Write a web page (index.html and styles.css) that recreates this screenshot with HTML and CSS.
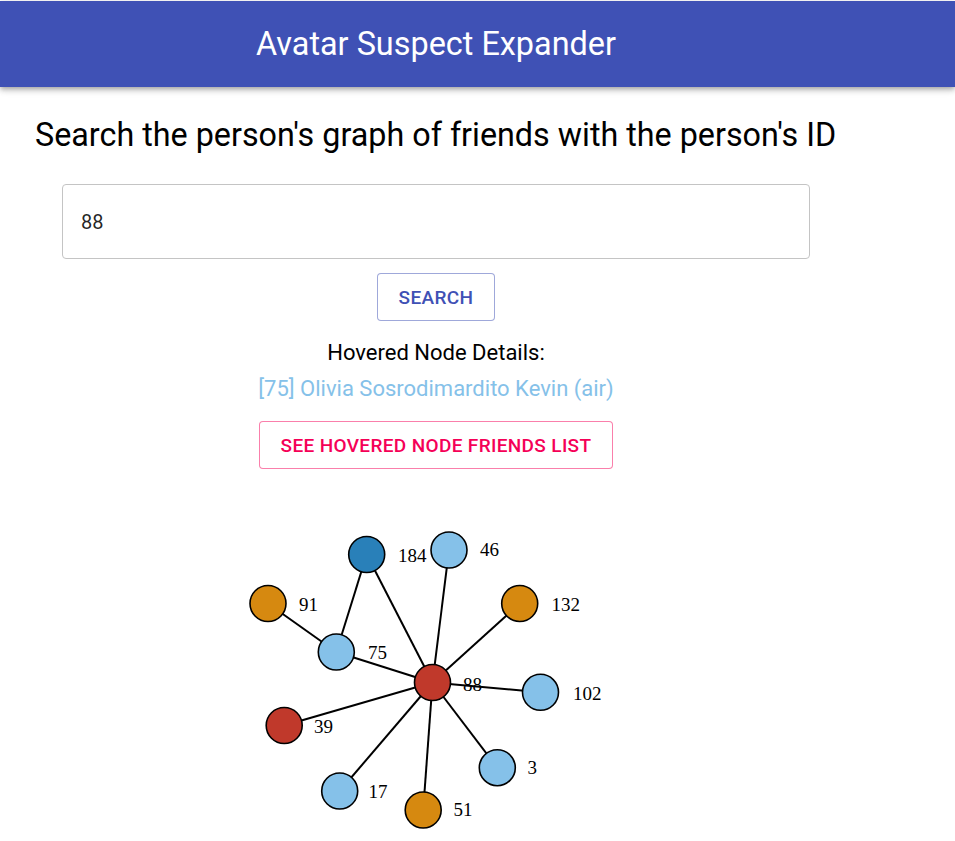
FILE: index.html
```html
<!DOCTYPE html>
<html>
<head>
<meta charset="utf-8">
<title>Avatar Suspect Expander</title>
<link rel="stylesheet" href="styles.css">
</head>
<body>
<header class="appbar">
  <div class="appbar-inner">
    <h1 class="app-title">Avatar Suspect Expander</h1>
  </div>
</header>
<main class="content">
  <h2 class="page-heading">Search the person's graph of friends with the person's ID</h2>
  <div class="search-form">
    <div class="text-field"><span class="text-value">88</span></div>
    <button class="btn btn-primary">Search</button>
    <div class="hover-label">Hovered Node Details:</div>
    <div class="hover-value">[75] Olivia Sosrodimardito Kevin (air)</div>
    <button class="btn btn-secondary">See hovered node friends list</button>
  </div>
  <svg class="graph" width="872" height="351" viewBox="0 490 872 351" xmlns="http://www.w3.org/2000/svg">
    <g class="edges">
      <line x1="432.5" y1="683.5" x2="366.7" y2="555.5"/>
      <line x1="432.5" y1="683.5" x2="449" y2="551"/>
      <line x1="432.5" y1="683.5" x2="519.7" y2="604.5"/>
      <line x1="432.5" y1="683.5" x2="336.3" y2="653"/>
      <line x1="432.5" y1="683.5" x2="540.5" y2="693.3"/>
      <line x1="432.5" y1="683.5" x2="284.2" y2="726.5"/>
      <line x1="432.5" y1="683.5" x2="497.3" y2="768.7"/>
      <line x1="432.5" y1="683.5" x2="339.7" y2="792"/>
      <line x1="432.5" y1="683.5" x2="423.2" y2="811"/>
      <line x1="336.3" y1="653" x2="268" y2="604.5"/>
      <line x1="336.3" y1="653" x2="366.7" y2="555.5"/>
    </g>
    <g class="nodes">
      <circle class="n-dark" cx="366.7" cy="555.5" r="18"/>
      <circle class="n-light" cx="449" cy="551" r="18"/>
      <circle class="n-orange" cx="268" cy="604.5" r="18"/>
      <circle class="n-orange" cx="519.7" cy="604.5" r="18"/>
      <circle class="n-light" cx="336.3" cy="653" r="18"/>
      <circle class="n-red" cx="432.5" cy="683.5" r="18"/>
      <circle class="n-light" cx="540.5" cy="693.3" r="18"/>
      <circle class="n-red" cx="284.2" cy="726.5" r="18"/>
      <circle class="n-light" cx="497.3" cy="768.7" r="18"/>
      <circle class="n-light" cx="339.7" cy="792" r="18"/>
      <circle class="n-orange" cx="423.2" cy="811" r="18"/>
    </g>
    <g class="labels">
      <text x="398" y="562.5">184</text>
      <text x="480" y="557">46</text>
      <text x="299" y="611.5">91</text>
      <text x="551.5" y="611.5">132</text>
      <text x="368" y="659.5">75</text>
      <text x="463" y="691.5">88</text>
      <text x="573" y="700.5">102</text>
      <text x="314" y="733.5">39</text>
      <text x="527.5" y="775">3</text>
      <text x="368.5" y="798.5">17</text>
      <text x="453.5" y="817">51</text>
    </g>
  </svg>
</main>
</body>
</html>
```

FILE: styles.css
```css
* { box-sizing: border-box; }

body {
  margin: 0;
  font-family: Roboto, "Liberation Sans", Arial, sans-serif;
  color: #000;
  background: #fff;
}

.appbar {
  margin-top: 1px;
  height: 86px;
  background: #3f51b5;
  box-shadow: 0 2px 4px -1px rgba(0,0,0,0.2), 0 4px 5px 0 rgba(0,0,0,0.14), 0 1px 10px 0 rgba(0,0,0,0.12);
  display: flex;
  align-items: center;
}

.appbar-inner {
  width: 872px;
  text-align: center;
}

.app-title {
  margin: 0;
  color: #fff;
  font-size: 32.4px;
  font-weight: 400;
  line-height: 1;
}

.content {
  width: 872px;
}

.page-heading {
  margin: 28px 0 0 35px;
  font-size: 32.3px;
  font-weight: 400;
  line-height: 40px;
}

.search-form {
  display: flex;
  flex-direction: column;
  align-items: center;
  margin-top: 29px;
}

.text-field {
  width: 748px;
  height: 75px;
  border: 1px solid #c4c4c4;
  border-radius: 4px;
  display: flex;
  align-items: center;
  padding-left: 18px;
}

.text-value {
  font-size: 20px;
  color: rgba(0,0,0,0.87);
}

.btn {
  font-family: Roboto, "Liberation Sans", Arial, sans-serif;
  font-size: 19px;
  font-weight: 500;
  letter-spacing: 0.35px;
  text-transform: uppercase;
  background: #fff;
  border-radius: 4px;
  height: 48px;
  padding: 0 21px;
  cursor: pointer;
}

.btn-primary {
  margin-top: 14px;
  color: #3f51b5;
  border: 1px solid rgba(63,81,181,0.5);
}

.btn-secondary {
  margin-top: 19px;
  color: #f50057;
  border: 1px solid rgba(245,0,87,0.5);
}

.hover-label {
  margin-top: 19px;
  font-size: 22px;
  line-height: 26px;
}

.hover-value {
  margin-top: 10px;
  font-size: 22px;
  line-height: 26px;
  color: #85c1e9;
}

.graph {
  display: block;
  margin-top: 20px;
}

.edges line {
  stroke: #000;
  stroke-width: 2;
}

.nodes circle {
  stroke: #000;
  stroke-width: 1.6;
}

.n-light { fill: #85c1e9; }
.n-dark { fill: #2980b9; }
.n-orange { fill: #d68910; }
.n-red { fill: #c0392b; }

.labels text {
  font-family: "Liberation Serif", "Times New Roman", serif;
  font-size: 19px;
  fill: #000;
}
```
